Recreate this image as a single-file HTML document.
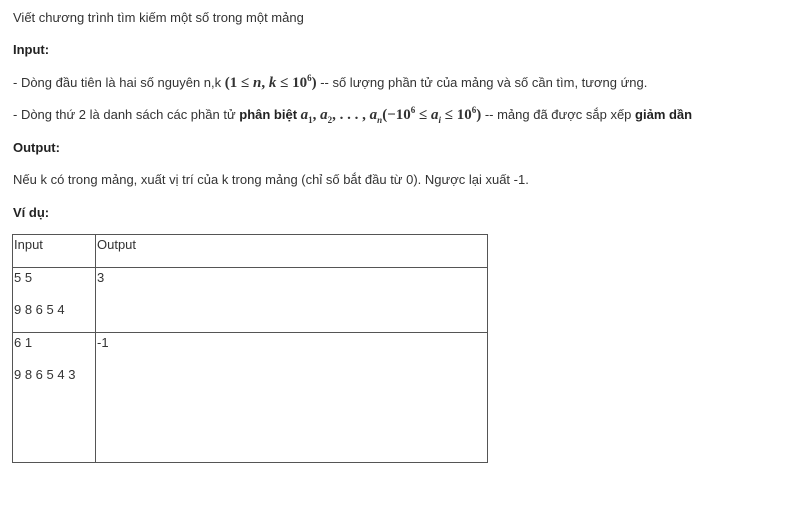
<!DOCTYPE html>
<html><head><meta charset="utf-8"><style>
body{margin:0;background:#fff;font-family:"Liberation Sans",sans-serif;font-size:13px;color:#333;}
.l{position:absolute;left:13px;white-space:nowrap;line-height:16px;height:16px;}
b{font-weight:bold;color:#222}
sup,sub{font-size:9px;line-height:0;}
.mr{font-family:"Liberation Serif",serif;font-size:15px;font-weight:bold;line-height:16px}
table{position:absolute;left:12px;top:234px;border-collapse:collapse;width:476px;}
td{border:1px solid #555;vertical-align:top;padding:2px 1px;font-size:13px;}
td p{margin:0 0 16px 0;line-height:16px}
</style></head><body>
<div class="l" style="top:10px">Viết chương trình tìm kiếm một số trong một mảng</div>
<div class="l" style="top:42px"><b>Input:</b></div>
<div class="l" style="top:75px">- Dòng đầu tiên là hai số nguyên n,k <span class="mr">(1 ≤ <i>n</i>, <i>k</i> ≤ 10<sup>6</sup>)</span> -- số lượng phần tử của mảng và số cần tìm, tương ứng.</div>
<div class="l" style="top:107px">- Dòng thứ 2 là danh sách các phần tử <b>phân biệt</b> <span class="mr"><i>a</i><sub>1</sub>, <i>a</i><sub>2</sub>, . . . , <i>a<sub>n</sub></i>(−10<sup>6</sup> ≤ <i>a<sub>i</sub></i> ≤ 10<sup>6</sup>)</span> -- mảng đã được sắp xếp <b>giảm dần</b></div>
<div class="l" style="top:140px"><b>Output:</b></div>
<div class="l" style="top:172px">Nếu k có trong mảng, xuất vị trí của k trong mảng (chỉ số bắt đầu từ 0). Ngược lại xuất -1.</div>
<div class="l" style="top:205px"><b>Ví dụ:</b></div>
<table>
<tr style="height:33px"><td style="width:80px"><p style="margin:0">Input</p></td><td><p style="margin:0">Output</p></td></tr>
<tr style="height:65px"><td><p>5 5</p><p style="margin:0">9 8 6 5 4</p></td><td><p>3</p></td></tr>
<tr style="height:130px"><td><p>6 1</p><p>9 8 6 5 4 3</p></td><td><p>-1</p></td></tr>
</table>
</body></html>
